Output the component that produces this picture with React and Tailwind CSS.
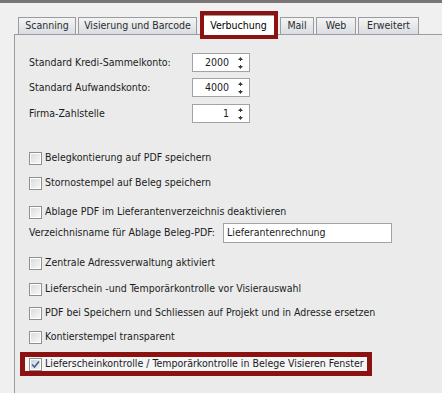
import React from 'react';

const tabs = [
  { label: 'Scanning', w: 'w-[58px]' },
  { label: 'Visierung und Barcode', w: 'w-[119px]' },
];
const tabsRight = [
  { label: 'Mail', w: 'w-[34px]' },
  { label: 'Web', w: 'w-[40px]' },
  { label: 'Erweitert', w: 'w-[61px]' },
];

const Tab = ({ label, w }) => (
  <div
    className={`${w} h-[17px] flex items-center justify-center border border-b-0 border-[#9a9c9f] bg-gradient-to-b from-[#f4f4f4] to-[#d9dde2] text-[#2d2d2d]`}
  >
    {label}
  </div>
);

const Spinner = ({ value }) => (
  <div className="w-[58px] h-[19px] bg-white border border-[#a3a3a3] flex items-center">
    <span className="flex-1 text-right pr-[8px]">{value}</span>
    <svg width="7" height="14" viewBox="0 0 7 14" className="mr-[5px]">
      <path d="M3.5 1 L6 4 L1 4 Z" fill="#3a3a3a" />
      <rect x="3" y="4" width="1" height="1" fill="#3a3a3a" />
      <rect x="3" y="9" width="1" height="1" fill="#3a3a3a" />
      <path d="M1 10 L6 10 L3.5 13 Z" fill="#3a3a3a" />
    </svg>
  </div>
);

const Checkbox = ({ checked }) => (
  <div className="w-[13px] h-[13px] border border-[#8e8f8f] bg-white p-[1px] shrink-0">
    <div
      className={`w-full h-full bg-gradient-to-br flex items-center justify-center ${
        checked ? 'from-[#c9d4e4] to-[#eef2f8]' : 'from-[#dcdcdc] to-[#f7f7f7]'
      }`}
    >
      {checked && (
        <svg width="9" height="9" viewBox="0 0 9 9">
          <path d="M1 4.5 L3.5 7 L8 1.5" stroke="#4a5f86" strokeWidth="1.6" fill="none" />
        </svg>
      )}
    </div>
  </div>
);

const CheckRow = ({ label, className = '', checked }) => (
  <div className={`h-[16px] flex items-center gap-[3px] whitespace-nowrap ${className}`}>
    <Checkbox checked={checked} />
    <span>{label}</span>
  </div>
);

export default function App() {
  return (
    <div
      className="relative w-[442px] h-[393px] overflow-hidden bg-[#f0f0f0] text-[10.5px] text-[#1c1c1c] flex flex-col whitespace-nowrap"
      style={{ fontFamily: 'Tahoma, "DejaVu Sans Condensed", "Liberation Sans", sans-serif' }}
    >
      <div className="h-[3px] bg-[#7a7676] shrink-0" />

      {/* tab strip */}
      <div className="mt-[14px] pl-[18px] flex items-end gap-[2px] h-[17px] shrink-0 relative z-10">
        {tabs.map((t) => (
          <Tab key={t.label} {...t} />
        ))}
        <div className="w-[77px] h-[20px] mx-[1px] flex items-center justify-center border border-b-0 border-[#9a9c9f] bg-white text-black -mb-[1px]">
          Verbuchung
        </div>
        {tabsRight.map((t) => (
          <Tab key={t.label} {...t} />
        ))}
      </div>

      {/* red highlight around selected tab */}
      <div className="absolute left-[200px] top-[11px] w-[78px] h-[28px] border-4 border-[#8c1212] z-20" />

      {/* panel */}
      <div className="ml-[14px] flex-1 border-l border-t border-[#9a9c9f] bg-[#ebebeb] pl-[14px] flex flex-col">
        <div className="mt-[18px] h-[19px] flex items-center">
          <span className="w-[163px]">Standard Kredi-Sammelkonto:</span>
          <Spinner value="2000" />
        </div>
        <div className="mt-[6px] h-[19px] flex items-center">
          <span className="w-[163px]">Standard Aufwandskonto:</span>
          <Spinner value="4000" />
        </div>
        <div className="mt-[7px] h-[19px] flex items-center">
          <span className="w-[163px]">Firma-Zahlstelle</span>
          <Spinner value="1" />
        </div>

        <CheckRow className="mt-[27px]" label="Belegkontierung auf PDF speichern" />
        <CheckRow className="mt-[9px]" label="Stornostempel auf Beleg speichern" />
        <CheckRow className="mt-[13px]" label="Ablage PDF im Lieferantenverzeichnis deaktivieren" />
        <div className="mt-[3px] h-[20px] flex items-center">
          <span className="w-[194px]">Verzeichnisname für Ablage Beleg-PDF:</span>
          <div className="w-[169px] h-[20px] bg-white border border-[#a3a3a3] flex items-center pl-[3px]">
            Lieferantenrechnung
          </div>
        </div>
        <CheckRow className="mt-[12px]" label="Zentrale Adressverwaltung aktiviert" />
        <CheckRow className="mt-[10px]" label="Lieferschein -und Temporärkontrolle vor Visierauswahl" />
        <CheckRow className="mt-[8px]" label="PDF bei Speichern und Schliessen auf Projekt und in Adresse ersetzen" />
        <CheckRow className="mt-[8px]" label="Kontierstempel transparent" />

        <div className="mt-[11px] relative h-[16px]">
          <div className="absolute left-[-9px] top-[-4px] w-[352px] h-[24px] border-[5px] border-[#8c1212] bg-[#f5f5f5]" />
          <CheckRow className="relative" checked label="Lieferscheinkontrolle / Temporärkontrolle in Belege Visieren Fenster" />
        </div>
      </div>
    </div>
  );
}
